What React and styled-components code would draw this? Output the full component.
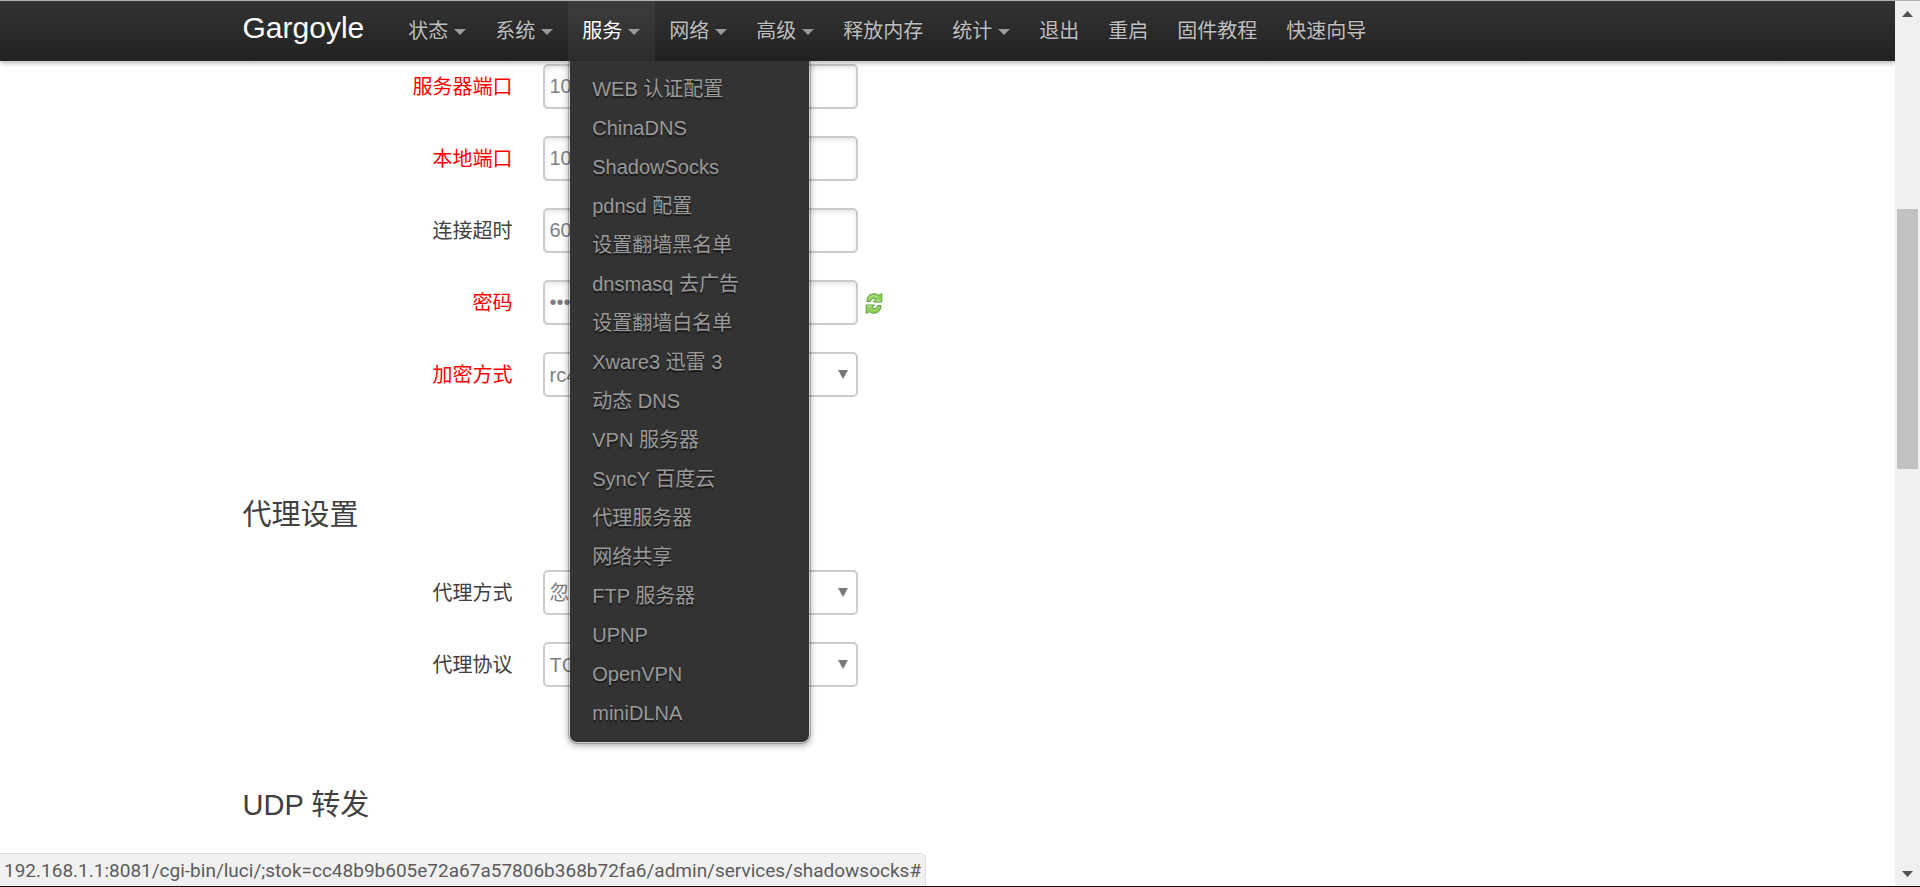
import React from 'react';
import styled, { createGlobalStyle } from 'styled-components';

const GlobalStyle = createGlobalStyle`
  *, *::before, *::after { box-sizing: border-box; }
  html, body, #root { height: 100%; }
  body {
    margin: 0;
    overflow: hidden;
    background: #fff;
    color: #404040;
    font-family: "Liberation Sans", "Noto Sans CJK SC", sans-serif;
    font-size: 20px;
    line-height: 28px;
  }
`;

const Window = styled.div`
  display: grid;
  grid-template-columns: minmax(0, 1fr) 25px;
  position: relative;
  height: 100%;
  border-top: 1px solid #b0b0b0;
  border-bottom: 1px solid #111;
`;

const Page = styled.div`
  display: flex;
  flex-direction: column;
  min-height: 0;
  overflow: hidden;
`;

const TopBar = styled.header`
  position: relative;
  z-index: 2;
  flex: none;
  background: linear-gradient(#333, #222);
  box-shadow: 0 2px 5px rgba(0, 0, 0, 0.3);
`;

const Container = styled.div`
  width: 100%;
  max-width: 1410px;
  margin: 0 auto;
`;

const BarContent = styled(Container)`
  display: flex;
  align-items: stretch;
  height: 60px;
`;

const Brand = styled.a`
  margin-right: 30px;
  color: #fff;
  font-size: 30px;
  line-height: 54px;
  text-decoration: none;
`;

const Menu = styled.ul`
  display: flex;
  margin: 0;
  padding: 0;
  list-style: none;
`;

const MenuItem = styled.li`
  position: relative;
`;

const MenuLink = styled.a`
  display: flex;
  align-items: center;
  gap: 6px;
  height: 60px;
  padding: 0 15px 0 14px;
  background: ${(p) => (p.$active ? 'rgba(255, 255, 255, 0.05)' : 'transparent')};
  color: ${(p) => (p.$active ? '#fff' : '#bfbfbf')};
  text-decoration: none;
  text-shadow: 0 -1px 0 rgba(0, 0, 0, 0.25);
  white-space: nowrap;
`;

const Caret = styled.span`
  margin-top: 2px;
  border: 6px solid transparent;
  border-top-color: #999;
  border-bottom: 0;
`;

const Dropdown = styled.ul`
  position: absolute;
  top: 100%;
  left: 0;
  min-width: 243px;
  margin: 0;
  padding: 9px 0;
  border: 2px solid rgba(0, 0, 0, 0.2);
  border-top: 0;
  border-radius: 0 0 9px 9px;
  background: #333;
  background-clip: padding-box;
  box-shadow: 0 2px 6px rgba(0, 0, 0, 0.3);
  list-style: none;
`;

const DropdownLink = styled.a`
  display: block;
  padding: 0 22px;
  color: #999;
  line-height: 39px;
  text-decoration: none;
  text-shadow: 0 2px 1px rgba(0, 0, 0, 0.5);
  white-space: nowrap;
`;

const Content = styled.main`
  flex: 1;
  min-height: 0;
  overflow: hidden;
`;

const Section = styled.section`
  display: flex;
  flex-direction: column;
  gap: 27px;
  padding: 3px 0 87px;
`;

const SectionTitle = styled.h2`
  margin: 0;
  font-size: 29px;
  font-weight: 400;
  line-height: 56px;
`;

const Field = styled.div`
  display: flex;
  align-items: center;
`;

const FieldLabel = styled.label`
  width: 270px;
  margin-right: 30px;
  color: ${(p) => (p.$required ? '#f00' : '#404040')};
  text-align: right;
`;

const Control = styled.div`
  position: relative;
  width: 315px;
`;

const TextInput = styled.input`
  display: block;
  width: 100%;
  height: 45px;
  padding: 0 5px;
  border: 2px solid #ccc;
  border-radius: 5px;
  background: #fff;
  box-shadow: inset 0 2px 5px rgba(0, 0, 0, 0.1);
  color: #808080;
  font: inherit;
`;

const SelectBox = styled.select`
  display: block;
  width: 100%;
  height: 45px;
  padding: 0 30px 0 5px;
  border: 2px solid #ccc;
  border-radius: 5px;
  appearance: none;
  background: #fff;
  color: #808080;
  font: inherit;
`;

const SelectArrow = styled.span`
  position: absolute;
  top: 18px;
  right: 10px;
  border: 5px solid transparent;
  border-top: 9px solid #777;
  border-bottom: 0;
  pointer-events: none;
`;

const RevealButton = styled.button`
  display: flex;
  margin: 0 0 0 5px;
  padding: 0;
  border: 0;
  background: none;
`;

const StatusUrl = styled.div`
  position: absolute;
  bottom: 0;
  left: 0;
  z-index: 3;
  height: 33px;
  padding: 0 4px;
  border: 1px solid #ddd;
  border-width: 1px 1px 0 0;
  border-radius: 0 6px 0 0;
  background: #f1f1f1;
  color: #5c5c5c;
  font-family: Roboto, sans-serif;
  font-size: 19px;
  line-height: 33px;
  white-space: nowrap;
`;

const Scrollbar = styled.div`
  display: flex;
  flex-direction: column;
  background: #f0f0f0;
`;

const ScrollButton = styled.button`
  display: flex;
  align-items: center;
  justify-content: center;
  height: 25px;
  padding: 0;
  border: 0;
  background: none;
`;

const Track = styled.div`
  display: grid;
  flex: 1;
  grid-template-rows: 183fr 260fr 392fr;
  padding: 0 2px;
`;

const Thumb = styled.div`
  grid-row: 2;
  background: #c1c1c1;
`;

const menu = [
  { text: '状态', drop: true },
  { text: '系统', drop: true },
  { text: '服务', drop: true, open: true },
  { text: '网络', drop: true },
  { text: '高级', drop: true },
  { text: '释放内存' },
  { text: '统计', drop: true },
  { text: '退出' },
  { text: '重启' },
  { text: '固件教程' },
  { text: '快速向导' },
];

const services = [
  'WEB 认证配置', 'ChinaDNS', 'ShadowSocks', 'pdnsd 配置', '设置翻墙黑名单',
  'dnsmasq 去广告', '设置翻墙白名单', 'Xware3 迅雷 3', '动态 DNS', 'VPN 服务器',
  'SyncY 百度云', '代理服务器', '网络共享', 'FTP 服务器', 'UPNP', 'OpenVPN', 'miniDLNA',
];

function TextField({ id, label, value, required, type = 'text', children }) {
  return (
    <Field>
      <FieldLabel htmlFor={id} $required={required}>{label}</FieldLabel>
      <Control><TextInput id={id} type={type} defaultValue={value} /></Control>
      {children}
    </Field>
  );
}

function SelectField({ id, label, value, required }) {
  return (
    <Field>
      <FieldLabel htmlFor={id} $required={required}>{label}</FieldLabel>
      <Control>
        <SelectBox id={id} defaultValue={value}><option>{value}</option></SelectBox>
        <SelectArrow />
      </Control>
    </Field>
  );
}

const arrowPath = 'M4 10.500C4 5.500 7 2.800 11 2.800c2 0 3.300.5 4.500 1.500L18.800 2.500V11H10.500L13 8.200C10.700 6.800 8.300 7.600 7.800 9.500L7.500 10.500z';

function ReloadIcon() {
  return (
    <svg width="22" height="24" viewBox="0 0 22 24" aria-hidden="true">
      <g fill="#8ed05a" stroke="#5a9c40" strokeLinejoin="round">
        <path d={arrowPath} />
        <path d={arrowPath} transform="rotate(180 11 12.500)" />
      </g>
      <path d="M6 8.500C7.200 5 11 3.500 14.500 6.200M4.500 15.200h4M13.500 9.700h4" fill="none" stroke="#c9efa4" />
    </svg>
  );
}

export default function App() {
  return (
    <>
      <GlobalStyle />
      <Window>
        <Page>
          <TopBar>
            <BarContent>
              <Brand href="#">Gargoyle</Brand>
              <nav>
                <Menu>
                  {menu.map((item) => (
                    <MenuItem key={item.text}>
                      <MenuLink href="#" $active={item.open}>
                        {item.text}
                        {item.drop && <Caret />}
                      </MenuLink>
                      {item.open && (
                        <Dropdown>
                          {services.map((name) => (
                            <li key={name}><DropdownLink href="#">{name}</DropdownLink></li>
                          ))}
                        </Dropdown>
                      )}
                    </MenuItem>
                  ))}
                </Menu>
              </nav>
            </BarContent>
          </TopBar>
          <Content>
            <Container>
              <Section>
                <TextField id="server-port" label="服务器端口" value="1080" required />
                <TextField id="local-port" label="本地端口" value="1080" required />
                <TextField id="timeout" label="连接超时" value="60" />
                <TextField id="password" label="密码" value="password" type="password" required>
                  <RevealButton type="button" aria-label="显示密码"><ReloadIcon /></RevealButton>
                </TextField>
                <SelectField id="cipher" label="加密方式" value="rc4-md5" required />
              </Section>
              <Section>
                <SectionTitle>代理设置</SectionTitle>
                <SelectField id="proxy-mode" label="代理方式" value="忽略列表" />
                <SelectField id="proxy-protocol" label="代理协议" value="TCP" />
              </Section>
              <Section>
                <SectionTitle>UDP 转发</SectionTitle>
              </Section>
            </Container>
          </Content>
        </Page>
        <Scrollbar>
          <ScrollButton type="button" aria-label="向上滚动">
            <svg width="11" height="6" viewBox="0 0 11 6"><path d="M0 6 5.500 0 11 6z" fill="#505050" /></svg>
          </ScrollButton>
          <Track><Thumb /></Track>
          <ScrollButton type="button" aria-label="向下滚动">
            <svg width="11" height="6" viewBox="0 0 11 6"><path d="M0 0h11L5.500 6z" fill="#505050" /></svg>
          </ScrollButton>
        </Scrollbar>
        <StatusUrl>192.168.1.1:8081/cgi-bin/luci/;stok=cc48b9b605e72a67a57806b368b72fa6/admin/services/shadowsocks#</StatusUrl>
      </Window>
    </>
  );
}
